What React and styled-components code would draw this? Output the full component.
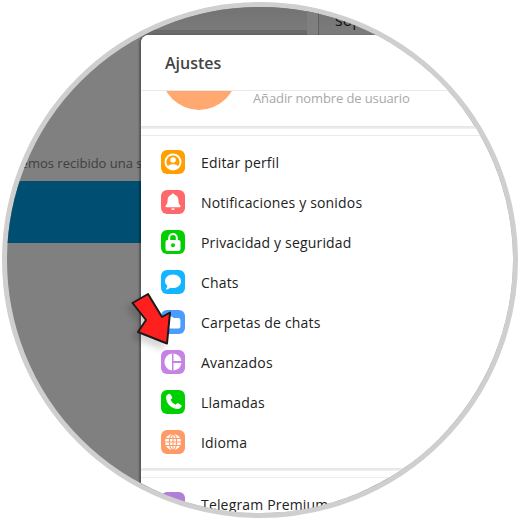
import React from 'react'
import styled, { createGlobalStyle } from 'styled-components'

const GlobalStyle = createGlobalStyle`
  html, body {
    margin: 0;
    padding: 0;
    background: #fff;
  }
  body {
    font-family: 'Open Sans', 'Noto Sans', sans-serif;
  }
`

const Page = styled.div`
  position: relative;
  width: 520px;
  height: 520px;
  padding: 2px;
  box-sizing: border-box;
`

const Lens = styled.main`
  width: 516px;
  height: 516px;
  box-sizing: border-box;
  border: 5px solid #cfcfcf;
  border-radius: 50%;
  overflow: hidden;
  display: flex;
  background: #808080;
`

const Backdrop = styled.section`
  width: 134px;
  flex: none;
  padding-top: 147px;
  overflow: hidden;
`

const Notice = styled.p`
  margin: 0 0 8px 4px;
  height: 19px;
  font-size: 13px;
  line-height: 19px;
  color: #3f3f3f;
  white-space: nowrap;
`

const Banner = styled.div`
  height: 62px;
  background: #004f72;
`

const Side = styled.div`
  flex: 1;
  display: flex;
  flex-direction: column;
  min-width: 0;
`

const TopBar = styled.div`
  height: 28px;
  flex: none;
  display: flex;
  overflow: hidden;
  background: linear-gradient(#737373, #7c7c7c);
`

const TabFill = styled.div`
  width: 166px;
  border-bottom: 5px solid #6a6a6a;
`

const TabEdge = styled.div`
  width: 11px;
  background: #7f7f7f;
  border-right: 1px solid #5f5f5f;
`

const TabLabel = styled.span`
  padding: 3px 0 0 16px;
  font-size: 16px;
  line-height: 20px;
  color: #111;
`

const Modal = styled.section`
  flex: 1;
  background: #fff;
  border-top-left-radius: 8px;
  box-shadow: -2px 0 2px rgba(0, 0, 0, 0.22), -6px 0 0 -4px rgba(0, 0, 0, 0.1);
  overflow: hidden;
`

const Header = styled.header`
  position: relative;
  height: 56px;
  box-sizing: border-box;
  padding: 18px 0 0 24px;
  background: #fff;
  border-bottom: 1px solid #e9e9e9;
  font-size: 16px;
  line-height: 20px;
  font-weight: 600;
  color: #444;
`

const Profile = styled.div`
  height: 35px;
  padding-left: 20px;
  display: flex;
  gap: 16px;
`

const Avatar = styled.div`
  width: 76px;
  height: 76px;
  flex: none;
  margin-top: -57px;
  border-radius: 50%;
  background: #ffa970;
`

const Username = styled.span`
  font-size: 13px;
  line-height: 14px;
  letter-spacing: -0.12px;
  color: #a8a8a8;
`

const Divider = styled.div`
  position: relative;
  height: 9px;
  background: linear-gradient(#e3e3e3, #f1f1f1 3px, #fff 3px);
  border-bottom: 1px solid #ececec;
`

const Menu = styled.ul`
  list-style: none;
  margin: 0;
  padding: 6px 0;
`

const Row = styled.li`
  height: 40px;
  padding-left: 20px;
  display: flex;
  align-items: center;
  gap: 16px;
  font-size: 14px;
  letter-spacing: 0.17px;
  color: #222;
  white-space: nowrap;
`

const Badge = styled.span`
  width: 24px;
  height: 24px;
  flex: none;
  border-radius: 6px;
  background: ${props => props.$bg};
  display: flex;
  align-items: center;
  justify-content: center;
`

const Glyph = styled.svg`
  width: 24px;
  height: 24px;
  fill: #fff;
`

const Arrow = styled.svg`
  position: absolute;
  left: 120px;
  top: 285px;
  width: 70px;
  height: 75px;
  filter: drop-shadow(-5px 5px 3px rgba(0, 0, 0, 0.16));
`

const icons = {
  profile: (
    <>
      <path fillRule="evenodd" d="M12 3.500a8.500 8.500 0 1 1 0 17 8.500 8.500 0 0 1 0-17Zm0 2a6.500 6.500 0 0 0-5 10.650C8 14.800 9.800 14.300 12 14.300s4 .5 5 1.850A6.500 6.500 0 0 0 12 5.500Z" />
      <circle cx="12" cy="10" r="2.800" />
    </>
  ),
  bell: (
    <>
      <path d="M12 3.500c.8 0 1.400.6 1.500 1.300 2.500.7 3.900 2.800 3.900 5.500 0 2.600.6 4 1.800 5.200.7.700.2 1.800-.8 1.800H5.600c-1 0-1.500-1.100-.8-1.800C6 14.300 6.600 12.900 6.600 10.300c0-2.700 1.400-4.800 3.900-5.500.1-.7.700-1.300 1.500-1.300Z" />
      <path d="M10.200 18.600h3.600a1.800 1.400 0 0 1-3.600 0Z" />
    </>
  ),
  lock: (
    <path fillRule="evenodd" d="M12 3a4.800 4.800 0 0 1 4.800 4.800V10h.7A2 2 0 0 1 19.500 12v7a2 2 0 0 1-2 2h-11a2 2 0 0 1-2-2v-7a2 2 0 0 1 2-2h.7V7.800A4.800 4.800 0 0 1 12 3Zm0 2A2.800 2.800 0 0 0 9.200 7.800V10h5.600V7.800A2.800 2.800 0 0 0 12 5Zm0 8.200a2 2 0 1 0 0 4 2 2 0 0 0 0-4Z" />
  ),
  chat: (
    <path d="M12 4.500c4.600 0 8 2.900 8 6.800s-3.400 6.800-8 6.800c-.9 0-1.700-.1-2.500-.3-1 .9-2.500 1.500-4.200 1.600-.4 0-.6-.4-.3-.7.8-.8 1.300-1.800 1.300-2.900C4.900 14.600 4 13 4 11.300c0-3.900 3.400-6.800 8-6.800Z" />
  ),
  folder: (
    <path d="M6.500 6.500h3.800c.5 0 1 .2 1.300.6l.9.9h4.900a2 2 0 0 1 2 2v6.500a2 2 0 0 1-2 2h-11a2 2 0 0 1-2-2v-8a2 2 0 0 1 2-2Z" />
  ),
  pie: (
    <>
      <path d="M11 3.600V20.400a8.450 8.450 0 0 1 0-16.800Z" />
      <path d="M12.500 3.600a8.450 8.450 0 0 1 7.900 7.400h-7.900V3.600Z" />
      <path d="M12.500 13h7.900a8.450 8.450 0 0 1-7.900 7.400V13Z" />
    </>
  ),
  phone: (
    <path d="M7.800 3.800c.6-.3 1.200-.2 1.600.4l1.700 2.900c.3.500.2 1.100-.2 1.500l-1.300 1.200c1 2.200 2.700 3.900 5 5l1.200-1.300c.4-.4 1-.5 1.500-.2l2.800 1.700c.6.300.7 1 .4 1.600-.8 1.300-2 2.500-3.500 2.500C10.500 19 5 13.500 5 7.300c0-1.500 1.400-2.700 2.800-3.500Z" />
  ),
  star: (
    <path d="m12 5 2.200 4.500 4.800.7-3.500 3.400.8 4.900-4.300-2.300-4.300 2.300.8-4.900L5 10.200l4.800-.7L12 5Z" />
  ),
}

// the globe's grid is cut out in the badge colour
const Globe = ({ color }) => (
  <>
    <circle cx="12" cy="12" r="8" />
    <g fill="none" stroke={color} strokeWidth="1.100">
      <ellipse cx="12" cy="12" rx="3.600" ry="8" />
      <path d="M12 4v16M4 12h16M5 8.500h14M5 15.500h14" />
    </g>
  </>
)

const mainItems = [
  { label: 'Editar perfil', bg: '#ff9f00', icon: 'profile' },
  { label: 'Notificaciones y sonidos', bg: '#ff696c', icon: 'bell' },
  { label: 'Privacidad y seguridad', bg: '#00d000', icon: 'lock' },
  { label: 'Chats', bg: '#12b5ff', icon: 'chat' },
  { label: 'Carpetas de chats', bg: '#4a9dff', icon: 'folder' },
  { label: 'Avanzados', bg: '#c583e8', icon: 'pie' },
  { label: 'Llamadas', bg: '#00cf00', icon: 'phone' },
  { label: 'Idioma', bg: '#ff9a66', icon: 'globe' },
]

const MenuRow = ({ item }) => (
  <Row>
    <Badge $bg={item.bg}>
      <Glyph viewBox="0 0 24 24">
        {item.icon === 'globe' ? <Globe color={item.bg} /> : icons[item.icon]}
      </Glyph>
    </Badge>
    {item.label}
  </Row>
)

export default function App() {
  return (
    <Page>
      <GlobalStyle />
      <Lens>
        <Backdrop>
          <Notice>Hemos recibido una solicitud</Notice>
          <Banner />
        </Backdrop>
        <Side>
          <TopBar>
            <TabFill />
            <TabEdge />
            <TabLabel>soporte</TabLabel>
          </TopBar>
          <Modal>
            <Header>Ajustes</Header>
            <Profile>
              <Avatar />
              <Username>Añadir nombre de usuario</Username>
            </Profile>
            <Divider />
            <Menu>
              {mainItems.map(item => <MenuRow key={item.label} item={item} />)}
            </Menu>
            <Divider />
            <Menu>
              <MenuRow item={{ label: 'Telegram Premium', bg: '#b17fd6', icon: 'star' }} />
            </Menu>
          </Modal>
        </Side>
      </Lens>
      <Arrow viewBox="120 285 70 75">
        <polygon
          points="132.500,303 148,294 162,317 170,312.500 167,343.500 138,332 146,320"
          fill="#ff1f1f"
          stroke="#1a1a1a"
          strokeWidth="2"
          strokeLinejoin="round"
        />
      </Arrow>
    </Page>
  )
}
